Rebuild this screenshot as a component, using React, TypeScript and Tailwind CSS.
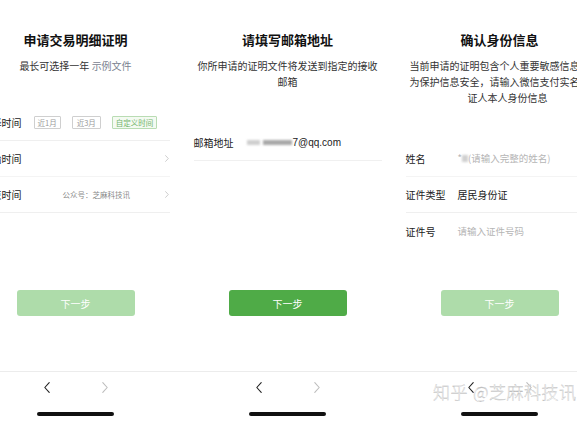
import React from "react";

const Chev = ({ dir, color, w = 6, h = 11 }: { dir: "l" | "r"; color: string; w?: number; h?: number }) => (
  <svg width={w} height={h} viewBox="0 0 6 11" fill="none">
    {dir === "l" ? (
      <path d="M5.2 0.6L0.8 5.5L5.2 10.4" stroke={color} strokeWidth="1.1" strokeLinecap="round" strokeLinejoin="round" />
    ) : (
      <path d="M0.8 0.6L5.2 5.5L0.8 10.4" stroke={color} strokeWidth="1.1" strokeLinecap="round" strokeLinejoin="round" />
    )}
  </svg>
);

const RowChev = () => (
  <svg width="4" height="7" viewBox="0 0 4 7" fill="none" className="ml-auto mr-[1px]">
    <path d="M0.6 0.6L3.3 3.5L0.6 6.4" stroke="#c8c8c8" strokeWidth="0.9" strokeLinecap="round" strokeLinejoin="round" />
  </svg>
);

const Bottom = () => (
  <div className="mt-auto h-[51px] border-t border-[#ececec] flex flex-col items-center">
    <div className="h-[30px] w-full flex items-center justify-center gap-[52px]">
      <Chev dir="l" color="#222" />
      <Chev dir="r" color="#bdbdbd" />
    </div>
    <div className="mt-[10px] h-[3.5px] w-[77px] rounded-full bg-[#111]" />
  </div>
);

const Title = ({ children }: { children: React.ReactNode }) => (
  <div className="pt-[31px] text-center text-[13px] leading-[18px] font-bold text-[#111]">{children}</div>
);

const Button = ({ active }: { active?: boolean }) => (
  <div
    className={
      "mx-auto w-[118px] h-[26px] rounded-[3px] flex items-center justify-center text-[10px] text-white " +
      (active ? "bg-[#4fab47]" : "bg-[#aedcaa] text-[#eaf6e8]")
    }
  >
    下一步
  </div>
);

export default function App() {
  return (
    <div className="w-[577px] h-[422px] overflow-hidden bg-white font-['Noto_Sans_CJK_SC','Noto_Sans',sans-serif]">
      <div className="flex ml-[-30.5px]">
        {/* Panel 1 */}
        <div className="w-[212px] shrink-0 h-[422px] flex flex-col">
          <div className="h-[290px]">
            <Title>申请交易明细证明</Title>
            <div className="mt-[9px] text-center text-[10px] leading-[16px] text-[#333]">
              最长可选择一年 <span className="text-[#7a8290]">示例文件</span>
            </div>
            <div className="mt-[31px]">
              <div className="mx-[12px] h-[36px] border-b border-[#efefef] flex items-center">
                <div className="w-[52px] text-[10px] text-[#222]">选择时间</div>
                <div className="flex items-center">
                  <span className="mr-[11px] h-[13px] px-[3px] border border-[#cfcfcf] rounded-[1px] text-[7.5px] leading-[11px] text-[#999]">近1月</span>
                  <span className="mr-[11px] h-[13px] px-[4px] border border-[#cfcfcf] rounded-[1px] text-[7.5px] leading-[11px] text-[#999]">近3月</span>
                  <span className="h-[13px] px-[3px] border border-[#b9dcb3] bg-[#f4faf2] rounded-[1px] text-[7.5px] leading-[11px] text-[#72b46b]">自定义时间</span>
                </div>
              </div>
              <div className="mx-[12px] h-[36px] border-b border-[#f4f4f4] flex items-center">
                <div className="w-[52px] text-[10px] text-[#222]">开始时间</div>
                <RowChev />
              </div>
              <div className="mx-[12px] h-[36px] border-b border-[#efefef] flex items-center">
                <div className="w-[52px] text-[10px] text-[#222]">结束时间</div>
                <span className="ml-[29px] text-[7.5px] text-[#8a8a8a]">公众号：芝麻科技讯</span>
                <RowChev />
              </div>
            </div>
          </div>
          <Button />
          <Bottom />
        </div>

        {/* Panel 2 */}
        <div className="w-[212px] shrink-0 h-[422px] flex flex-col">
          <div className="h-[290px]">
            <Title>请填写邮箱地址</Title>
            <div className="mt-[9px] px-[16px] text-center text-[10px] leading-[16px] text-[#333]">
              你所申请的证明文件将发送到指定的接收邮箱
            </div>
            <div className="mt-[35px]">
              <div className="mx-[12px] h-[36px] border-b border-[#f0f0f0] flex items-center">
                <div className="w-[53px] text-[10px] text-[#222]">邮箱地址</div>
                <div className="flex items-center text-[10px] text-[#222] font-['Liberation_Sans',sans-serif]">
                  <span className="w-[13px] h-[5px] bg-[#cfcfcf] blur-[1.2px]" />
                  <span className="ml-[3px] w-[29px] h-[5px] bg-[#a9a9a9] blur-[1.2px]" />
                  <span className="ml-[1px]">7@qq.com</span>
                </div>
              </div>
            </div>
          </div>
          <Button active />
          <Bottom />
        </div>

        {/* Panel 3 */}
        <div className="relative w-[212px] shrink-0 h-[422px] flex flex-col">
          <div className="h-[290px]">
            <Title>确认身份信息</Title>
            <div className="mt-[9px] pl-[16px] text-center text-[10px] leading-[16px] text-[#333] whitespace-nowrap">
              <div className="text-left">当前申请的证明包含个人重要敏感信息，</div>
              <div className="text-left">为保护信息安全，请输入微信支付实名认</div>
              <div>证人本人身份信息</div>
            </div>
            <div className="mt-[35px]">
              <div className="mx-[12px] h-[36px] border-b border-[#f4f4f4] flex items-center">
                <div className="w-[52px] text-[10px] text-[#222]">姓名</div>
                <div className="flex items-center text-[9.5px] text-[#b5b5b5]">
                  <span>*</span>
                  <span className="w-[6px] h-[7px] bg-[#d0d0d0] blur-[0.8px]" />
                  <span>(请输入完整的姓名)</span>
                </div>
              </div>
              <div className="mx-[12px] h-[36px] border-b border-[#efefef] flex items-center">
                <div className="w-[52px] text-[10px] text-[#222]">证件类型</div>
                <div className="text-[10px] text-[#222]">居民身份证</div>
              </div>
              <div className="mx-[12px] h-[36px] flex items-center">
                <div className="w-[52px] text-[10px] text-[#222]">证件号</div>
                <div className="text-[9.5px] text-[#b5b5b5]">请输入证件号码</div>
              </div>
            </div>
          </div>
          <Button />
          <Bottom />
          <div className="absolute left-[39.5px] top-[381px] whitespace-nowrap text-[17px] leading-[22px] tracking-[0.5px] font-light text-[#fdfdfd] [-webkit-text-stroke:0.3px_#b4b4b4]">
            知乎<span className="ml-[5px]">@芝麻科技讯</span>
          </div>
        </div>
      </div>
    </div>
  );
}
